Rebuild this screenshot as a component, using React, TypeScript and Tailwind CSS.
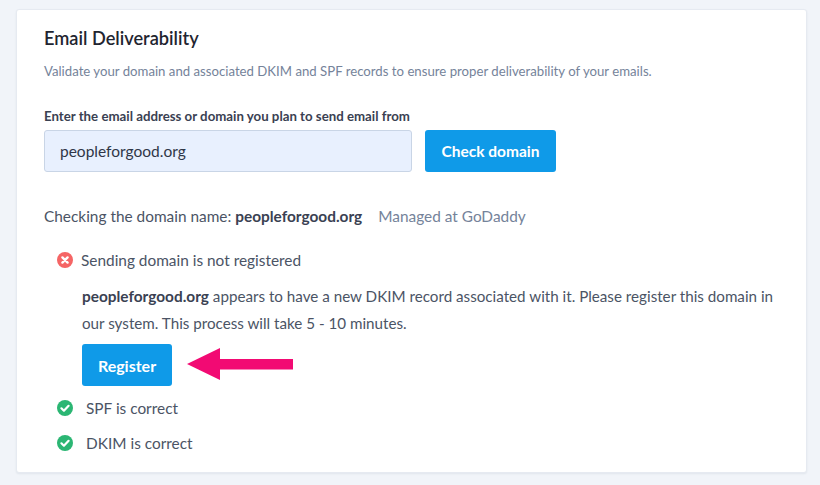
import React from 'react';

const ErrorIcon = () => (
  <svg width="16" height="16" viewBox="0 0 16 16" className="shrink-0">
    <circle cx="8" cy="8" r="8" fill="#f56565" />
    <path d="M5.4 5.4l5.2 5.2M10.6 5.4l-5.2 5.2" stroke="#fff" strokeWidth="2.4" strokeLinecap="round" />
  </svg>
);

const CheckIcon = () => (
  <svg width="16" height="16" viewBox="0 0 16 16" className="shrink-0">
    <circle cx="8" cy="8" r="8" fill="#2bb673" />
    <path d="M4.4 8.3l2.5 2.4 4.7-4.9" fill="none" stroke="#fff" strokeWidth="2.2" strokeLinecap="round" strokeLinejoin="round" />
  </svg>
);

const Arrow = () => (
  <svg width="106" height="34" viewBox="0 0 106 34" className="block">
    <path d="M0 17L33 1V12H106V22.500H33V33Z" fill="#f20a73" />
  </svg>
);

export default function App() {
  return (
    <div className="w-[820px] h-[485px] overflow-hidden bg-[#f1f4f9] pt-[9px] pl-[16px] font-['Lato','Noto_Sans',sans-serif]">
      <div className="w-[791px] h-[464px] bg-white rounded-[3px] border border-[#e6eaf1] shadow-[0_1px_2px_rgba(40,60,90,0.08)] pl-[27px] pt-[15px]">
        <h1 className="text-[18.2px] leading-[26px] font-semibold text-[#1f2530]">Email Deliverability</h1>
        <p className="mt-[10px] text-[13.2px] leading-[20px] text-[#75839a]">
          Validate your domain and associated DKIM and SPF records to ensure proper deliverability of your emails.
        </p>
        <label className="block mt-[25px] text-[13.25px] leading-[20px] font-bold text-[#3a4152]">
          Enter the email address or domain you plan to send email from
        </label>
        <div className="flex gap-[13px] mt-[4px]">
          <div className="w-[368px] h-[42px] flex items-center pl-[15px] pt-[1px] bg-[#e8f0fe] border border-[#c9d5e6] rounded-[3px] text-[15.5px] text-[#2f3647]">
            peopleforgood.org
          </div>
          <button className="w-[131px] h-[42px] pt-[1px] bg-[#0f9ae8] rounded-[3px] text-white text-[15.5px] font-bold">
            Check domain
          </button>
        </div>
        <div className="flex mt-[33px] text-[15.4px] leading-[22px]">
          <span className="text-[#4b5465]">
            Checking the domain name: <b className="font-bold text-[#3a4152]">peopleforgood.org</b>
          </span>
          <span className="ml-[16px] text-[#75839a]">Managed at GoDaddy</span>
        </div>
        <div className="flex items-center gap-[8px] mt-[22px] ml-[13px] text-[15.4px] leading-[22px] text-[#4b5465]">
          <ErrorIcon />
          <span>Sending domain is not registered</span>
        </div>
        <p className="mt-[12px] ml-[38px] w-[700px] text-[15.2px] leading-[27px] text-[#4b5465]">
          <b className="text-[15.4px] font-bold text-[#3a4152]">peopleforgood.org</b> appears to have a new DKIM record associated with it. Please register this domain in our system. This process will take 5 - 10 minutes.
        </p>
        <div className="flex items-center mt-[7px] ml-[38px]">
          <button className="w-[90px] h-[42px] pt-[1px] bg-[#0f9ae8] rounded-[3px] text-white text-[16px] font-bold">
            Register
          </button>
          <div className="ml-[15px] -mt-[2px]">
            <Arrow />
          </div>
        </div>
        <div className="flex items-center gap-[13px] mt-[11px] ml-[13px] text-[15.4px] leading-[22px] text-[#4b5465]">
          <CheckIcon />
          <span>SPF is correct</span>
        </div>
        <div className="flex items-center gap-[13px] mt-[13px] ml-[13px] text-[15.4px] leading-[22px] text-[#4b5465]">
          <CheckIcon />
          <span>DKIM is correct</span>
        </div>
      </div>
    </div>
  );
}
